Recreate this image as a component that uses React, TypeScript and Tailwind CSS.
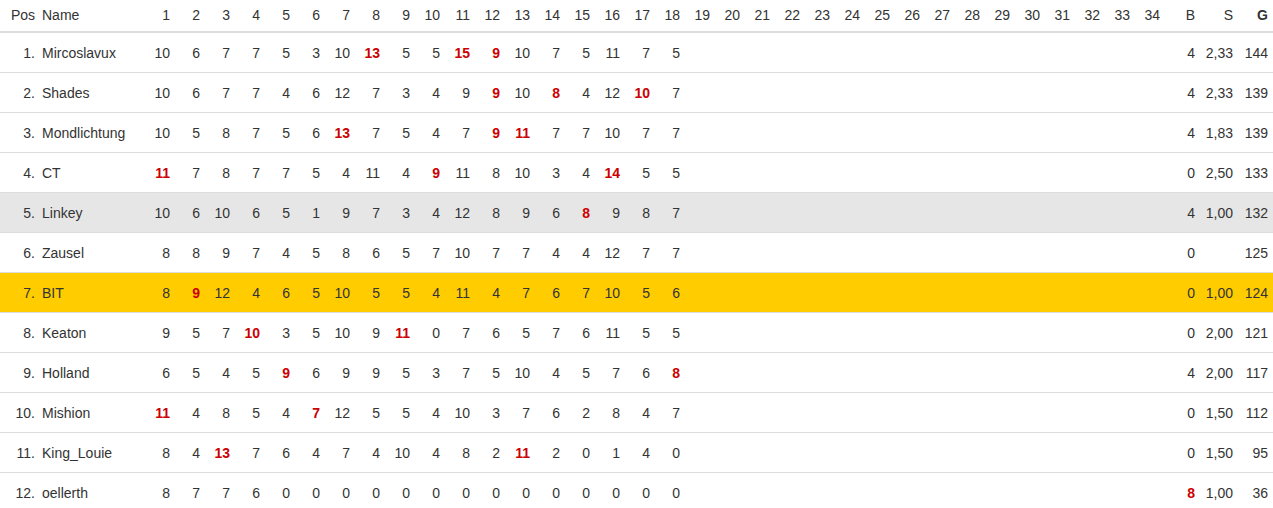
import React from "react";

type Row = {
  name: string;
  scores: (number | string)[];
  b: string;
  s: string;
  g: string;
  bg?: string;
};

// "*" marks a best round (red, bold)
const rows: Row[] = [
  { name: "Mircoslavux", scores: [10, 6, 7, 7, 5, 3, 10, "13*", 5, 5, "15*", "9*", 10, 7, 5, 11, 7, 5], b: "4", s: "2,33", g: "144" },
  { name: "Shades", scores: [10, 6, 7, 7, 4, 6, 12, 7, 3, 4, 9, "9*", 10, "8*", 4, 12, "10*", 7], b: "4", s: "2,33", g: "139" },
  { name: "Mondlichtung", scores: [10, 5, 8, 7, 5, 6, "13*", 7, 5, 4, 7, "9*", "11*", 7, 7, 10, 7, 7], b: "4", s: "1,83", g: "139" },
  { name: "CT", scores: ["11*", 7, 8, 7, 7, 5, 4, 11, 4, "9*", 11, 8, 10, 3, 4, "14*", 5, 5], b: "0", s: "2,50", g: "133" },
  { name: "Linkey", scores: [10, 6, 10, 6, 5, 1, 9, 7, 3, 4, 12, 8, 9, 6, "8*", 9, 8, 7], b: "4", s: "1,00", g: "132", bg: "bg-[#e6e6e6]" },
  { name: "Zausel", scores: [8, 8, 9, 7, 4, 5, 8, 6, 5, 7, 10, 7, 7, 4, 4, 12, 7, 7], b: "0", s: "", g: "125" },
  { name: "BIT", scores: [8, "9*", 12, 4, 6, 5, 10, 5, 5, 4, 11, 4, 7, 6, 7, 10, 5, 6], b: "0", s: "1,00", g: "124", bg: "bg-[#ffcc00]" },
  { name: "Keaton", scores: [9, 5, 7, "10*", 3, 5, 10, 9, "11*", 0, 7, 6, 5, 7, 6, 11, 5, 5], b: "0", s: "2,00", g: "121" },
  { name: "Holland", scores: [6, 5, 4, 5, "9*", 6, 9, 9, 5, 3, 7, 5, 10, 4, 5, 7, 6, "8*"], b: "4", s: "2,00", g: "117" },
  { name: "Mishion", scores: ["11*", 4, 8, 5, 4, "7*", 12, 5, 5, 4, 10, 3, 7, 6, 2, 8, 4, 7], b: "0", s: "1,50", g: "112" },
  { name: "King_Louie", scores: [8, 4, "13*", 7, 6, 4, 7, 4, 10, 4, 8, 2, "11*", 2, 0, 1, 4, 0], b: "0", s: "1,50", g: "95" },
  { name: "oellerth", scores: [8, 7, 7, 6, 0, 0, 0, 0, 0, 0, 0, 0, 0, 0, 0, 0, 0, 0], b: "8*", s: "1,00", g: "36" },
];

const rounds = Array.from({ length: 34 }, (_, i) => i + 1);

function Score({ v }: { v: number | string | undefined }) {
  if (v === undefined) return null;
  const str = String(v);
  if (str.endsWith("*")) {
    return <span className="font-bold text-[#cc0000]">{str.slice(0, -1)}</span>;
  }
  return <>{str}</>;
}

export default function App() {
  return (
    <div className="w-[1273px] bg-white font-['Liberation_Sans',Arial,sans-serif] text-[14px] text-[#333]">
      <table className="w-full table-fixed border-collapse">
        <colgroup>
          <col className="w-[38px]" />
          <col className="w-[107px]" />
          {rounds.map((r) => (
            <col key={r} className="w-[30px]" />
          ))}
          <col className="w-[35px]" />
          <col className="w-[38px]" />
          <col className="w-[35px]" />
        </colgroup>
        <thead>
          <tr className="h-[32px] border-b-2 border-[#dddddd]">
            <th className="pr-[3px] text-right font-normal">Pos</th>
            <th className="pl-[4px] text-left font-normal">Name</th>
            {rounds.map((r) => (
              <th key={r} className="pr-[5px] text-right font-normal">
                {r}
              </th>
            ))}
            <th className="pr-[5px] text-right font-normal">B</th>
            <th className="pr-[5px] text-right font-normal">S</th>
            <th className="pr-[5px] text-right font-bold">G</th>
          </tr>
        </thead>
        <tbody>
          {rows.map((row, i) => (
            <tr
              key={row.name}
              className={`h-[40px] border-t border-[#dddddd] first:border-t-0 [&>td]:pt-[2px] ${row.bg ?? ""}`}
            >
              <td className="pr-[3px] text-right">{i + 1}.</td>
              <td className="overflow-hidden whitespace-nowrap pl-[4px] text-left">{row.name}</td>
              {rounds.map((r) => (
                <td key={r} className="pr-[5px] text-right">
                  <Score v={row.scores[r - 1]} />
                </td>
              ))}
              <td className="pr-[5px] text-right">
                <Score v={row.b} />
              </td>
              <td className="pr-[5px] text-right">{row.s}</td>
              <td className="pr-[5px] text-right">{row.g}</td>
            </tr>
          ))}
        </tbody>
      </table>
    </div>
  );
}
